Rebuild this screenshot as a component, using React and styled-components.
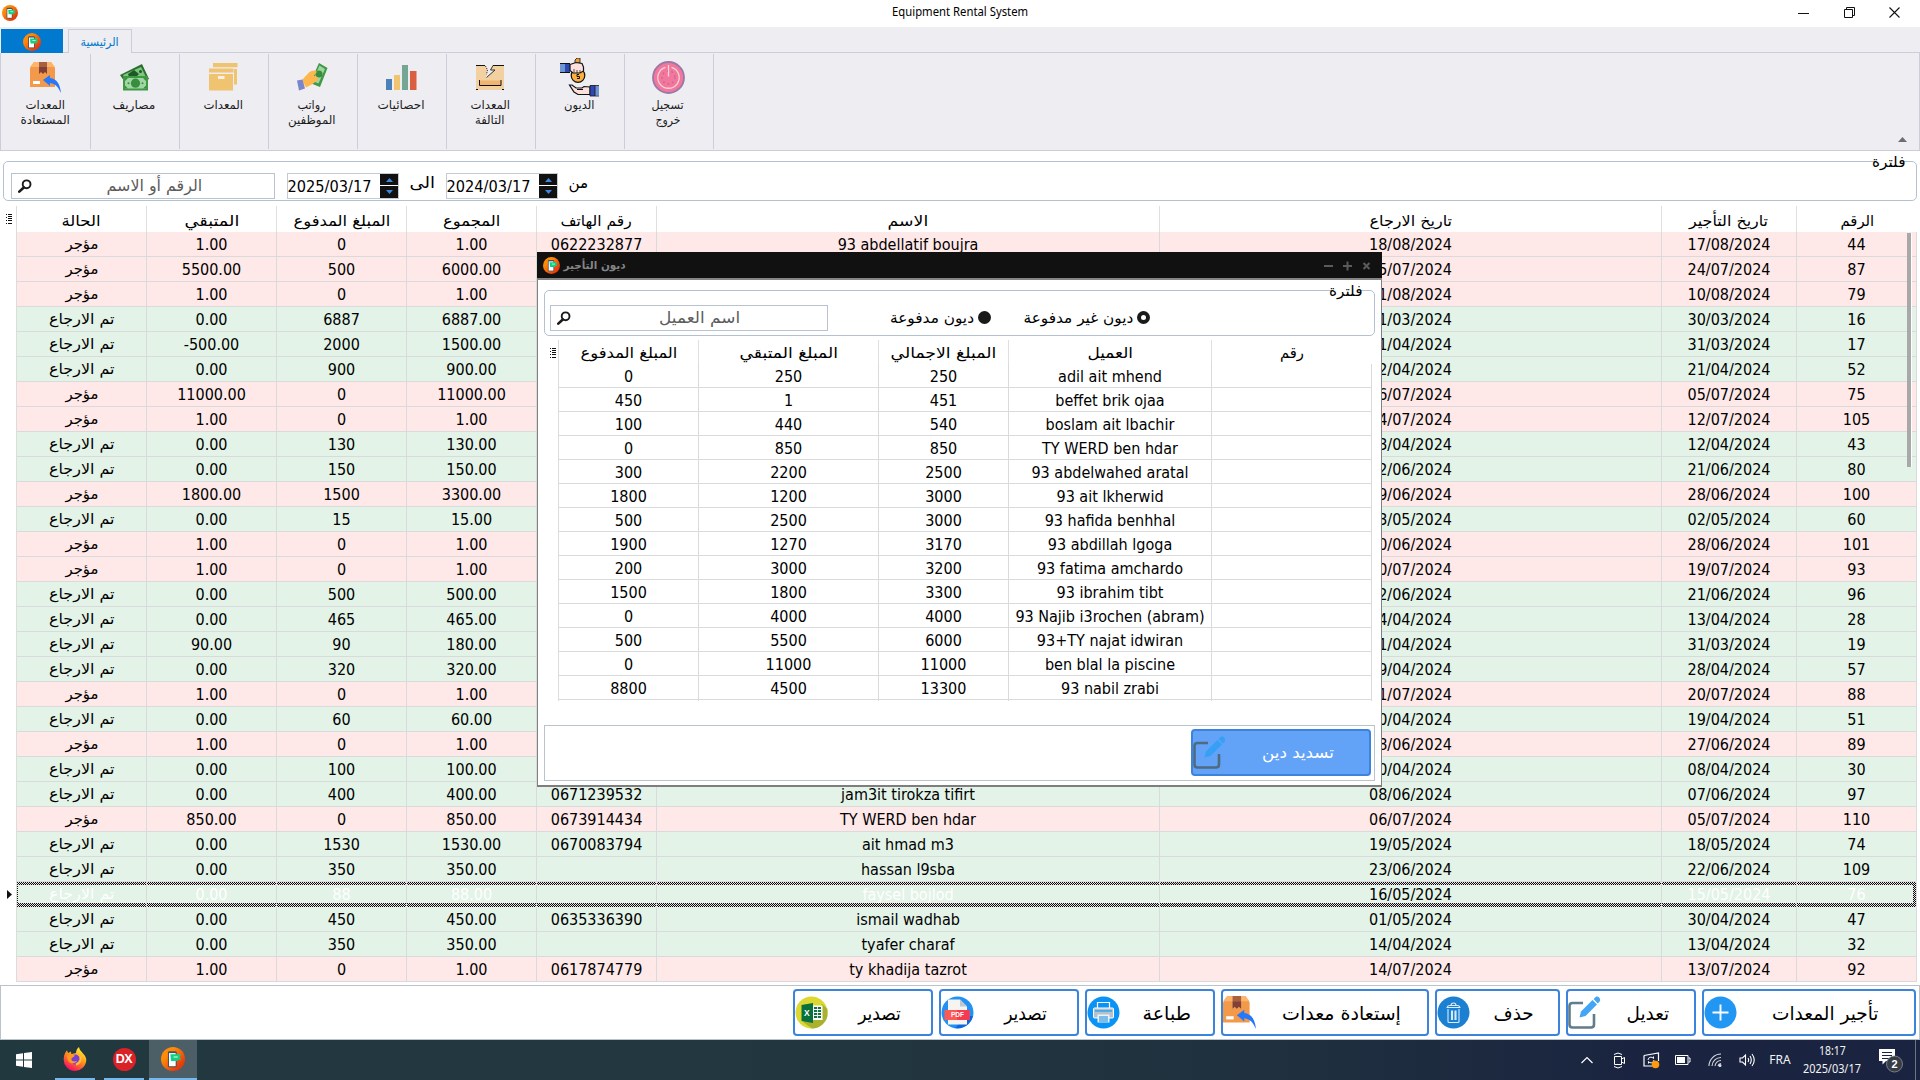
import React, { useLayoutEffect, useRef, useState } from "react";
import styled, { createGlobalStyle, css } from "styled-components";

const Global = createGlobalStyle`
  *{box-sizing:border-box}
  html,body{margin:0;padding:0;width:1920px;height:1080px;overflow:hidden;background:#fff}
  body{font-family:"DejaVu Sans Condensed","DejaVu Sans","Noto Sans",sans-serif;font-stretch:condensed;font-size:16px;color:#000}
  svg{display:block;flex:none}
`;

/* Text stretched horizontally so that it takes the given width */
const FitSpan = styled.span`
  display: inline-block;
  white-space: nowrap;
`;
function Fit({ w, children }) {
  const ref = useRef(null);
  const [s, setS] = useState(1);
  useLayoutEffect(() => {
    if (w && ref.current) setS(w / ref.current.offsetWidth);
  }, [w]);
  return <FitSpan ref={ref} style={{ transform: `scaleX(${s})` }}>{children}</FitSpan>;
}

const Screen = styled.div`
  width: 1920px;
  height: 1080px;
  display: flex;
  flex-direction: column;
  background: #fff;
`;

/* ---------- title bar ---------- */
const TitleBar = styled.header`
  height: 27px;
  display: grid;
  grid-template-columns: 150px 1fr 150px;
  align-items: start;
  flex: none;
`;
const TitleIcon = styled.div`
  padding: 5px 0 0 2px;
`;
const TitleText = styled.div`
  text-align: center;
  font: 12.3px/24px "Noto Sans", sans-serif;
`;
const WinButtons = styled.div`
  display: flex;
  height: 24px;
  align-items: center;
  justify-content: space-between;
  padding: 0 20px 0 28px;
`;

/* ---------- ribbon ---------- */
const Ribbon = styled.nav`
  height: 124px;
  flex: none;
  background: #eeedf2;
  border-bottom: 1px solid #ccccdb;
  display: flex;
  flex-direction: column;
`;
const Tabs = styled.div`
  height: 26px;
  padding: 2px 0 0 1px;
  display: flex;
`;
const FileTab = styled.div`
  width: 62px;
  height: 24px;
  background: #0079ce;
  display: flex;
  justify-content: center;
  align-items: center;
  padding-top: 2px;
`;
const TabGap = styled.div`
  width: ${(p) => p.$w || "auto"};
  flex: ${(p) => (p.$w ? "none" : 1)};
  border-bottom: 1px solid #ccccdb;
`;
const Tab = styled.div`
  width: 64px;
  height: 24px;
  border: 1px solid #ccccdb;
  border-bottom: 0;
  color: #0079ce;
  font-size: 12px;
  line-height: 25px;
  text-align: center;
`;
const Tools = styled.div`
  flex: 1;
  border-left: 1px solid #ccccdb;
  border-right: 1px solid #ccccdb;
  padding: 1px 0;
  display: flex;
  position: relative;
`;
const Tool = styled.div`
  width: 89px;
  height: 95px;
  border-right: 1px solid #ccccdb;
  display: flex;
  flex-direction: column;
  align-items: center;
  font-size: 12px;
  line-height: 15px;
  color: #1c1c1c;
  padding-right: 2px;
  &:first-child { width: 90px; padding-right: 1px; }
`;
const ToolIcon = styled.div`
  height: 44px;
  padding-top: 2px;
  display: flex;
  align-items: center;
  justify-content: center;
`;
const Collapse = styled.div`
  position: absolute;
  right: 12px;
  bottom: 8px;
`;

/* ---------- filter box ---------- */
const Group = styled.section`
  margin: ${(p) => p.$m};
  height: ${(p) => p.$h}px;
  flex: none;
  border: 1px solid #b4c1d2;
  border-radius: 5px;
  padding: 0 0 0 ${(p) => p.$pl}px;
  position: relative;
  display: flex;
  align-items: flex-start;
`;
const GroupLabel = styled.span`
  position: absolute;
  top: -13px;
  right: ${(p) => p.$r}px;
  background: linear-gradient(#fff, #fff) 0 11px / 100% 4px no-repeat;
  line-height: 26px;
  font-size: 15px;
`;
const Search = styled.div`
  width: ${(p) => p.$w}px;
  height: 26px;
  margin-top: ${(p) => p.$mt}px;
  border: 1px solid #b9c3d0;
  display: flex;
  align-items: center;
  padding-left: 6px;
  color: #5c5c5c;
  font-size: 16px;
`;
const SearchText = styled.div`
  flex: 1;
  text-align: center;
  line-height: 22px;
  padding-left: 2px;
`;
const DateBox = styled.div`
  margin-top: 11px;
  margin-left: ${(p) => p.$ml}px;
  width: 112px;
  height: 26px;
  border: 1px solid #c3ccd6;
  display: flex;
  justify-content: space-between;
  line-height: 25px;
  font-size: 16px;
`;
const Spin = styled.div`
  width: 18px;
  display: grid;
  grid-template-rows: 11px 12px;
  gap: 1px;
  & > div { background: #111; display: flex; align-items: center; justify-content: center; }
`;
const Word = styled.div`
  margin: 9px 0 0 ${(p) => p.$ml}px;
  width: ${(p) => p.$w}px;
  display: flex;
  justify-content: center;
  font-size: 16px;
  line-height: 24px;
`;

/* ---------- main table ---------- */
const COLS = "130px 130px 130px 130px 120px 503px 502px 135px 120px";
const TableArea = styled.section`
  height: 776px;
  margin-top: 5px;
  flex: none;
  display: flex;
`;
const Gutter = styled.div`
  width: ${(p) => p.$w}px;
  flex: none;
  display: flex;
  flex-direction: column;
  align-items: flex-end;
  padding: ${(p) => p.$p};
`;
const Marker = styled.div`
  margin-top: 666px;
`;
const Table = styled.div`
  width: ${(p) => p.$w}px;
  flex: none;
  border-left: 1px solid #dcdcdc;
  position: relative;
`;
const HeadRow = styled.div`
  display: grid;
  grid-template-columns: ${(p) => p.$cols};
  height: ${(p) => p.$h}px;
`;
const HeadCell = styled.div`
  border-right: 1px solid #dfdfdf;
  text-align: center;
  font-size: 15px;
  line-height: ${(p) => p.$lh}px;
  &:last-child { border-right: 0; }
`;
const Cell = styled.div`
  border-right: 1px solid #d8dadb;
  text-align: center;
  line-height: ${(p) => p.$lh}px;
  font-size: ${(p) => p.$fs || 16}px;
  white-space: nowrap;
  color: ${(p) => p.$c || "inherit"};
`;
const checker = "repeating-conic-gradient(#0c080a 0 25%, #ece2ea 0 50%)";
const Row = styled.div`
  display: grid;
  grid-template-columns: ${(p) => p.$cols};
  height: ${(p) => p.$h}px;
  background: ${(p) => p.$bg};
  border-bottom: 1px solid #d8dadb;
  color: ${(p) => (p.$sel ? "#fff" : "#000")};
  ${(p) => p.$sel && css`
    ${Cell} {
      background:
        linear-gradient(#e3f3e7, #e3f3e7) 0 3px / 100% 18px no-repeat,
        ${checker} 0 0 / 2px 2px;
      background-clip: content-box;
    }
    ${Cell}:first-child { border-left: 1px dotted #1a1418; }
    ${Cell}:last-child {
      background:
        linear-gradient(#e3f3e7, #e3f3e7) -3px 3px / 100% 18px no-repeat,
        ${checker} 0 0 / 2px 2px;
      background-clip: content-box;
    }
  `}
`;
const Thumb = styled.div`
  position: absolute;
  left: 1890px;
  top: 27px;
  width: 5px;
  height: 234px;
  background: #a8a8a8;
  border-right: 1px solid #fff;
`;

/* ---------- bottom buttons ---------- */
const ActionBar = styled.section`
  height: 55px;
  flex: none;
  border: 1px solid #b9c3cc;
  margin-top: 3px;
  display: flex;
  justify-content: flex-end;
  gap: 6px;
  padding: 3px 3px 0 0;
`;
const ActionButton = styled.div`
  width: ${(p) => p.$w}px;
  height: 47px;
  border: 2px solid #3b83dc;
  border-radius: 4px;
  background: ${(p) => (p.$fill ? "#62a2f7" : "#fff")};
  color: ${(p) => (p.$fill ? "#fff" : "#000")};
  display: flex;
  align-items: center;
  font-size: ${(p) => (p.$fill ? 16 : 19)}px;
  & > svg { margin-top: -1px; }
`;
const ActionText = styled.div`
  flex: 1;
  text-align: center;
  line-height: 28px;
  padding-top: 1px;
`;

/* ---------- modal window ---------- */
const Modal = styled.div`
  position: absolute;
  left: 537px;
  top: 252px;
  width: 845px;
  height: 535px;
  background: #fff;
  border: 1px solid #808080;
  border-top: 0;
  border-bottom: 2px solid #7e7e7e;
  display: flex;
  flex-direction: column;
`;
const ModalTitle = styled.div`
  height: 28px;
  flex: none;
  margin: 0 -1px;
  background: #111;
  border-bottom: 2px solid #858585;
  color: #858585;
  display: flex;
  align-items: center;
  padding: 1px 10px 0 6px;
  font-size: 11px;
  font-weight: bold;
  gap: 5px;
`;
const ModalWin = styled.div`
  margin-left: auto;
  display: flex;
  gap: 9px;
`;
const Radio = styled.div`
  margin: 13px 0 0 ${(p) => p.$ml}px;
  display: flex;
  align-items: center;
  gap: 4px;
  font-size: 15px;
  line-height: 28px;
  & > svg { margin-top: -2px; }
`;
const RadioLabel = styled.div`
  width: ${(p) => p.$w}px;
  display: flex;
  justify-content: center;
`;
const ModalBody = styled.div`
  height: 361px;
  margin-top: 4px;
  flex: none;
  display: flex;
`;
const ModalPanel = styled.div`
  height: 56px;
  margin: 24px 6px 0;
  border: 1px solid #b9c3cc;
  display: flex;
  justify-content: flex-end;
  padding: 3px 3px 0 0;
`;

/* ---------- taskbar ---------- */
const Taskbar = styled.footer`
  height: 40px;
  flex: none;
  display: flex;
  align-items: center;
  background: linear-gradient(90deg, #22383f 0%, #22363f 45%, #1f2f3e 68%, #1a2440 85%, #1a2340 100%);
  color: #f4f4f4;
`;
const TaskItem = styled.div`
  width: ${(p) => p.$w}px;
  height: 40px;
  margin-left: ${(p) => p.$ml || 0}px;
  display: flex;
  align-items: center;
  justify-content: center;
  border-bottom: ${(p) => (p.$line ? "2px solid #76b9ed" : "0")};
  background: ${(p) => (p.$active ? "#4d5f66" : "transparent")};
`;
const DX = styled.div`
  width: 23px;
  height: 23px;
  border-radius: 50%;
  background: #da2128;
  color: #fff;
  font: bold 12.5px/23px "Liberation Sans", sans-serif;
  text-align: center;
  letter-spacing: -0.5px;
`;
const Tray = styled.div`
  margin-left: auto;
  display: grid;
  grid-template-columns: 32px 32px 32px 32px 32px 32px 34px 70px 48px 5px;
  align-items: center;
  justify-items: center;
  height: 40px;
  font: 12px/18px "Noto Sans", sans-serif;
`;
const Clock = styled.div`
  text-align: center;
  white-space: nowrap;
`;
const Peek = styled.div`
  height: 40px;
  border-left: 1px solid #6d7580;
  justify-self: end;
  width: 5px;
`;

/* ---------- icons ---------- */
const AppIcon = ({ s = 16 }) => (
  <svg width={s} height={s} viewBox="0 0 18 18">
    <defs>
      <linearGradient id={"ag" + s} x1="0" y1="0" x2="1" y2="1">
        <stop offset="0.3" stopColor="#ff8a08" /><stop offset="0.8" stopColor="#e63a0c" />
      </linearGradient>
    </defs>
    <circle cx="9" cy="9" r="9" fill={`url(#ag${s})`} />
    <rect x="5.2" y="3.2" width="6.6" height="12" rx="1" fill="#46535e" />
    <rect x="6" y="4.6" width="5" height="9.8" fill="#fff" />
    <path d="M7 5.500H15L14 7.500 15 9.500H12.500V10.500H7.500Z" fill="#12cf86" />
    <path d="M9.4 7.5H12.6" stroke="#d8ffe9" strokeWidth=".8" />
  </svg>
);
const BoxReturn = ({ s = 31 }) => (
  <svg width={s} height={s} viewBox="0 0 31 31">
    <path d="M0 6 4 0H21L25 6V25H0Z" fill="#f39a4a" />
    <path d="M0 5 4 0H21L25 5Z" fill="#fbb56c" />
    <path d="M9 0h8v5H9z" fill="#a9603f" />
    <path d="M9 5h8v7l-2-2-2 2-2-2-2 2z" fill="#80403a" />
    <rect x="3" y="19" width="7" height="3" fill="#fff" />
    <path d="M13 18 20 13V16C27 17 30 22 31 31 28 25 26 22 20 21V24Z" fill="#2578fb" />
  </svg>
);
const Money = () => (
  <svg width="29" height="27" viewBox="0 0 29 27">
    <path d="M0 11 22 0 29 15 9 24Z" fill="#2c6e2f" />
    <path d="M3 11 21 3 26 13 9 22Z" fill="#7cc582" />
    <path d="M8 10 14 6 19 10 16 13H9Z" fill="#1d5a22" />
    <circle cx="20.5" cy="7.5" r="1.5" fill="#1d5a22" />
    <rect x="3" y="12" width="25" height="14.5" fill="#3f9844" />
    <rect x="5" y="14" width="21" height="10.5" fill="#a0d6a4" />
    <circle cx="15.5" cy="19.2" r="4.6" fill="#388e3c" />
    <path d="M5 14h3L5 17zM26 14h-3l3 3zM5 24.500h3L5 21.500zM26 24.500h-3l3-3z" fill="#388e3c" />
    <circle cx="8.500" cy="19.200" r="1" fill="#388e3c" /><circle cx="22.500" cy="19.200" r="1" fill="#388e3c" />
  </svg>
);
const Boxes = () => (
  <svg width="29" height="28" viewBox="0 0 29 28">
    <path d="M4 0H28.500V4.200H4ZM25 6H28V21.500H25Z" fill="#efc36f" />
    <path d="M0 5.500H24.500V9.500H0ZM0 11H24V27.500H0Z" fill="#efc36f" />
    <rect x="9" y="13" width="6.500" height="3" fill="#f8f1e4" />
  </svg>
);
const HandMoney = () => (
  <svg width="31" height="28" viewBox="0 0 31 28">
    <path d="M22 0 30.500 5 23 24 13 20Z" fill="#3f9844" />
    <path d="M22.500 2.500 28 6 21.500 20.500 15.500 18Z" fill="#9ed4a2" />
    <circle cx="22" cy="11" r="3.500" fill="#388e3c" />
    <path d="M5 17 12 9.500C14 8 18 6.500 19.500 8.500 20 10 17 12 17 13 19 14 20.500 13 21 15 21 18 16 21 9 24.500Z" fill="#ffb74d" />
    <path d="M0 17.500 5.500 16.500 8 25.500 2 27.500Z" fill="#7986cb" />
  </svg>
);
const Bars = () => (
  <svg width="31" height="25" viewBox="0 0 31 25">
    <path d="M0 14h6v11H0z" fill="#4b80b8" /><path d="M8 10h6v15H8z" fill="#f1c46f" />
    <path d="M16 0h6v25h-6z" fill="#75a693" /><path d="M24 6h6.500v19H24z" fill="#d95f40" />
  </svg>
);
const Broken = () => (
  <svg width="28" height="25" viewBox="0 0 28 25">
    <path d="M0 0H28V25H0Z" fill="#f3d09f" />
    <path d="M3.500 15.500H25V20.500H3.500Z" fill="#eeb470" />
    <path d="M9 0H17L14.500 5 19 4.500 10 13 11.500 5Z" fill="#eeedf2" />
    <path d="M0 .500H9M17 .500H28M3.500 15V20.500H25V15M0 24.500h2M26 24.500h2" fill="none" stroke="#111" />
    <path d="M9.500 1 11.500 5 10.500 9.500" fill="none" stroke="#222" strokeWidth=".9" strokeDasharray="1.200 1" />
    <path d="M17 .500 14.500 5H19L10.500 12.500" fill="none" stroke="#222" strokeWidth=".9" />
  </svg>
);
const Debts = () => (
  <svg width="39" height="39" viewBox="0 0 39 39">
    <path d="M0 5.500H5V14.500H0Z" fill="#6d96d2" /><path d="M5 5.500H10V14.500H5Z" fill="#2f49b4" />
    <path d="M0 5.500H10M0 14.500H10" stroke="#111" />
    <path d="M15 2 17 0H20V5H15Z" fill="#e9a03a" stroke="#111" strokeWidth=".8" />
    <circle cx="18" cy="17.500" r="6.800" fill="#fbb03f" stroke="#111" strokeWidth="1.200" />
    <path d="M10 6.500 16 4.500 22 5.500 23.500 9V13L20 15H13L10 12.500Z" fill="#fbe0de" stroke="#111" strokeWidth="1.200" />
    <path d="M14 11V14.500M17 12V15M20 12V15" stroke="#111" strokeWidth=".7" />
    <path d="M19 16.500H17V18.500H19.500V20.500H17" fill="none" stroke="#111" />
    <path d="M9.500 27 12 27 16 30H22L24 28.500 30 29V36.500H18L14 34Z" fill="#fbe0de" stroke="#111" strokeWidth="1.200" />
    <path d="M17 31.500H23" stroke="#111" />
    <path d="M30 27.500H35V38H30Z" fill="#2f49b4" /><path d="M35 28H39V37.500H35Z" fill="#6d96d2" />
    <path d="M30 27.500H39M30 38H39M30 27.500V38M35 27.500V38" stroke="#111" strokeWidth=".8" />
  </svg>
);
const Power = () => (
  <svg width="33" height="33" viewBox="0 0 33 33">
    <circle cx="16.500" cy="16.500" r="15.500" fill="#f2779d" stroke="#9a78a8" strokeWidth="1.800" />
    <circle cx="16.500" cy="16.500" r="6.500" fill="none" stroke="#b9668f" strokeWidth="1.300" strokeDasharray="1.500 3.200" />
    <path d="M13.500 6.300A10.700 10.700 0 1 0 19.500 6.300M16.500 4V15.500" fill="none" stroke="#fbd3d8" strokeWidth="1.300" />
  </svg>
);
const Lens = () => (
  <svg width="14" height="14" viewBox="0 0 14 14">
    <circle cx="8.600" cy="5.300" r="3.900" fill="none" stroke="#1b1b1b" strokeWidth="1.900" />
    <path d="M5.800 8.500 1.300 12.600" stroke="#1b1b1b" strokeWidth="2.600" strokeLinecap="round" />
  </svg>
);
const Plus = () => (
  <svg width="33" height="33" viewBox="0 0 33 33">
    <circle cx="16.500" cy="16.500" r="16" fill="#2196f3" />
    <path d="M16.500 8.500V24.500M8.500 16.500H24.500" stroke="#fff" strokeWidth="1.900" />
  </svg>
);
const Edit = ({ dim }) => (
  <svg width="33" height="33" viewBox="0 0 33 33">
    <path d="M15 7H4.500C2.500 7 1.500 8 1.500 10V28.500C1.500 30.500 2.500 31.500 4.500 31.500H23C25 31.500 26 30.500 26 28.500V18" fill="none" stroke={dim ? "#4f6b80" : "#5f7d8c"} strokeWidth="2.600" />
    <path d="M11.500 21.500 13 15.500 24.500 4 29 8.500 17.500 20Z" fill={dim ? "#35a0f5" : "#42a5f5"} />
    <path d="M25.600 3 28 .800C30 -.300 33 2.500 32 5L29.800 7.500Z" fill={dim ? "#35a0f5" : "#42a5f5"} />
  </svg>
);
const Trash = () => (
  <svg width="33" height="33" viewBox="0 0 33 33">
    <circle cx="16.500" cy="16.500" r="16" fill="#1b80d2" />
    <g fill="none" stroke="#d7ebfa" strokeWidth="1.100">
      <path d="M9.500 11.500H23.500M11 13V25.500Q11 26.500 12 26.500H21Q22 26.500 22 25.500V13M13 9.500H20Q22.500 9.500 22.500 11M10.500 11Q10.500 9.500 13 9.500M14 9.500Q14 7 16.500 7 19 7 19 9.500" />
      <path d="M14.500 15H15.500V23.500H14.500ZM18 15H19V23.500H18Z" />
    </g>
  </svg>
);
const Printer = () => (
  <svg width="33" height="33" viewBox="0 0 33 33">
    <circle cx="16.500" cy="16.500" r="16" fill="#0a93f5" />
    <path d="M10.500 12V6.500H22.500V12" fill="none" stroke="#fff" strokeWidth="1.200" />
    <rect x="6.500" y="12" width="20" height="10" rx="1" fill="#b6c2cb" stroke="#fff" />
    <rect x="8" y="14" width="17" height="1.800" fill="#46a8ec" />
    <rect x="10.500" y="18.500" width="12" height="8" fill="#e9f4fb" />
    <path d="M12 21H21M12 23H21M12 25H21" stroke="#1583d8" />
  </svg>
);
const IconText = styled.text`
  font: bold ${(p) => p.$s}px "Liberation Sans", sans-serif;
  fill: #fff;
`;
const Pdf = () => (
  <svg width="33" height="33" viewBox="0 0 33 33">
    <circle cx="16.500" cy="16.500" r="16" fill="#2191f3" />
    <path d="M14 32 26 20 32 20A16 16 0 0 1 14 32Z" fill="#0d66df" />
    <path d="M7 3.500H19L26 10.500V28.500H7Z" fill="#f6f4f0" />
    <path d="M19 3.500 26 10.500H19Z" fill="#bfc6cc" />
    <path d="M3.500 14H28.500V24H3.500Z" fill="#fd5a56" /><path d="M16 14H28.500V24H16Z" fill="#f9394f" />
    <IconText $s={6.500} x="10" y="21.400">PDF</IconText>
  </svg>
);
const Excel = () => (
  <svg width="33" height="33" viewBox="0 0 33 33">
    <circle cx="16.500" cy="16.500" r="16" fill="#dcd831" />
    <path d="M8 26 27 8 32.500 13V20A16 16 0 0 1 17 32.500Z" fill="#aab12f" />
    <rect x="17" y="9.500" width="10.500" height="14.500" fill="#fff" />
    <path d="M19 12H26M19 15H26M19 18H26M19 21H26" stroke="#117243" strokeWidth="1.800" />
    <path d="M22.500 10V24" stroke="#fff" strokeWidth=".8" />
    <path d="M6.500 9 18 7V27L6.500 25Z" fill="#08703c" />
    <IconText $s={8.500} x="9" y="20">X</IconText>
  </svg>
);
const Windows = () => (
  <svg width="16" height="16" viewBox="0 0 16 16"><path d="M0 2.200 7 1.200V7.500H0ZM8 1 16 0V7.500H8ZM0 8.500H7V14.800L0 13.800ZM8 8.500H16V16L8 15Z" fill="#fff" /></svg>
);
const Firefox = () => (
  <svg width="24" height="24" viewBox="0 0 24 24">
    <defs>
      <linearGradient id="ff" x1=".8" y1="0" x2=".25" y2="1"><stop offset=".1" stopColor="#ffe62e" /><stop offset=".5" stopColor="#ff8a1c" /><stop offset=".9" stopColor="#f8195f" /></linearGradient>
    </defs>
    <path d="M12 24A11.500 11.500 0 0 1 .8 11C1 7.500 2.500 5 4 3.300L5 6 8 4.500 8.300 7C10 6.500 12 6.500 13 6 13 3.500 14 1.500 16 0 16.500 3 18 4 20 6.500 22.500 9 23.300 11 23.300 13A11.500 11.500 0 0 1 12 24Z" fill="url(#ff)" />
    <circle cx="12" cy="12.500" r="5" fill="#7a3fd6" />
    <path d="M4 9C6 6.500 9.500 7 11.500 8 12 10.500 8 10 8.500 12.500 9 15 12 14.500 14 14 12 18 5 17 4.500 12Z" fill="#ff9a1e" />
    <path d="M16 7C19 10 18 16 13 17.500" fill="none" stroke="#ffbd2e" strokeWidth="2.200" />
  </svg>
);
const GridMark = () => (
  <svg width="6" height="10" viewBox="0 0 6 10">
    <path d="M0 .500H1M0 3.500H1M0 6.500H1M0 9.500H1M2 .500H6M2 2.500H6M2 4.500H6M2 6.500H6M2 9.500H6" stroke="#111" />
  </svg>
);
const tri = (up) => (
  <svg width="7" height="4" viewBox="0 0 7 4"><path d={up ? "M3.500 0 7 4H0Z" : "M3.500 4 7 0H0Z"} fill="#3d87df" /></svg>
);
const Spinner = () => <Spin><div>{tri(true)}</div><div>{tri(false)}</div></Spin>;

/* ---------- data ---------- */
const HEADS = [["الحالة", 39], ["المتبقي", 55], ["المبلغ المدفوع", 97], ["المجموع", 57], ["رقم الهاتف", 71], ["الاسم", 41], ["تاريخ الارجاع", 83], ["تاريخ التأجير", 79], ["الرقم", 34]];
const ROWS = [
  [1, "1.00", "0", "1.00", "0622232877", "93 abdellatif boujra", "18/08/2024", "17/08/2024", "44"],
  [1, "5500.00", "500", "6000.00", "", "", "25/07/2024", "24/07/2024", "87"],
  [1, "1.00", "0", "1.00", "", "", "11/08/2024", "10/08/2024", "79"],
  [0, "0.00", "6887", "6887.00", "", "", "31/03/2024", "30/03/2024", "16"],
  [0, "-500.00", "2000", "1500.00", "", "", "01/04/2024", "31/03/2024", "17"],
  [0, "0.00", "900", "900.00", "", "", "22/04/2024", "21/04/2024", "52"],
  [1, "11000.00", "0", "11000.00", "", "", "06/07/2024", "05/07/2024", "75"],
  [1, "1.00", "0", "1.00", "", "", "14/07/2024", "12/07/2024", "105"],
  [0, "0.00", "130", "130.00", "", "", "13/04/2024", "12/04/2024", "43"],
  [0, "0.00", "150", "150.00", "", "", "22/06/2024", "21/06/2024", "80"],
  [1, "1800.00", "1500", "3300.00", "", "", "29/06/2024", "28/06/2024", "100"],
  [0, "0.00", "15", "15.00", "", "", "03/05/2024", "02/05/2024", "60"],
  [1, "1.00", "0", "1.00", "", "", "30/06/2024", "28/06/2024", "101"],
  [1, "1.00", "0", "1.00", "", "", "20/07/2024", "19/07/2024", "93"],
  [0, "0.00", "500", "500.00", "", "", "22/06/2024", "21/06/2024", "96"],
  [0, "0.00", "465", "465.00", "", "", "14/04/2024", "13/04/2024", "28"],
  [0, "90.00", "90", "180.00", "", "", "01/04/2024", "31/03/2024", "19"],
  [0, "0.00", "320", "320.00", "", "", "29/04/2024", "28/04/2024", "57"],
  [1, "1.00", "0", "1.00", "", "", "21/07/2024", "20/07/2024", "88"],
  [0, "0.00", "60", "60.00", "", "", "20/04/2024", "19/04/2024", "51"],
  [1, "1.00", "0", "1.00", "", "", "28/06/2024", "27/06/2024", "89"],
  [0, "0.00", "100", "100.00", "", "", "10/04/2024", "08/04/2024", "30"],
  [0, "0.00", "400", "400.00", "0671239532", "jam3it tirokza tifirt", "08/06/2024", "07/06/2024", "97"],
  [1, "850.00", "0", "850.00", "0673914434", "TY WERD ben hdar", "06/07/2024", "05/07/2024", "110"],
  [0, "0.00", "1530", "1530.00", "0670083794", "ait hmad m3", "19/05/2024", "18/05/2024", "74"],
  [0, "0.00", "350", "350.00", "", "hassan l9sba", "23/06/2024", "22/06/2024", "109"],
  [2, "0.00", "88", "88.00", "", "faysel bojlod", "16/05/2024", "15/05/2024", "76"],
  [0, "0.00", "450", "450.00", "0635336390", "ismail wadhab", "01/05/2024", "30/04/2024", "47"],
  [0, "0.00", "350", "350.00", "", "tyafer charaf", "14/04/2024", "13/04/2024", "32"],
  [1, "1.00", "0", "1.00", "0617874779", "ty khadija tazrot", "14/07/2024", "13/07/2024", "92"],
];
const DCOLS = "140px 180px 130px 203px 160px";
const DHEADS = [["المبلغ المدفوع", 97], ["المبلغ المتبقي", 99], ["المبلغ الاجمالي", 106], ["العميل", 45], ["رقم", 24]];
const DROWS = [
  ["0", "250", "250", "adil ait mhend"], ["450", "1", "451", "beffet brik ojaa"], ["100", "440", "540", "boslam ait lbachir"],
  ["0", "850", "850", "TY WERD ben hdar"], ["300", "2200", "2500", "93 abdelwahed aratal"], ["1800", "1200", "3000", "93 ait lkherwid"],
  ["500", "2500", "3000", "93 hafida benhhal"], ["1900", "1270", "3170", "93 abdillah lgoga"], ["200", "3000", "3200", "93 fatima amchardo"],
  ["1500", "1800", "3300", "93 ibrahim tibt"], ["0", "4000", "4000", "93 Najib i3rochen (abram)"], ["500", "5500", "6000", "93+TY najat idwiran"],
  ["0", "11000", "11000", "ben blal la piscine"], ["8800", "4500", "13300", "93 nabil zrabi"],
];
const TOOLS = [
  [<BoxReturn key="i" />, ["المعدات", 40], ["المستعادة", 49]], [<Money key="i" />, ["مصاريف", 43]], [<Boxes key="i" />, ["المعدات", 40]],
  [<HandMoney key="i" />, ["رواتب", 28], ["الموظفين", 48]], [<Bars key="i" />, ["احصائيات", 47]], [<Broken key="i" />, ["المعدات", 40], ["التالفة", 29]],
  [<Debts key="i" />, ["الديون", 30]], [<Power key="i" />, ["تسجيل", 32], ["خروج", 25]],
];
const ACTIONS = [
  [140, <Excel key="i" />, "تصدير", 43], [140, <Pdf key="i" />, "تصدير", 43], [130, <Printer key="i" />, "طباعة", 48],
  [208, <BoxReturn key="i" s={33} />, "إستعادة معدات", 119], [125, <Trash key="i" />, "حذف", 40], [130, <Edit key="i" />, "تعديل", 43], [214, <Plus key="i" />, "تأجير المعدات", 106],
];

export default function App() {
  return (
    <Screen>
      <Global />
      <TitleBar>
        <TitleIcon><AppIcon s={16} /></TitleIcon>
        <TitleText><Fit w={136}>Equipment Rental System</Fit></TitleText>
        <WinButtons>
          <svg width="11" height="11"><path d="M0 6.500H11" stroke="#111" /></svg>
          <svg width="11" height="11"><path d="M.5 2.500H8.500V10.500H.5ZM2.500 2.500V.500H10.500V8.500H8.500" fill="none" stroke="#111" /></svg>
          <svg width="11" height="11"><path d="M.5 .500 10.500 10.500M10.500 .500 .500 10.500" stroke="#111" strokeWidth="1.100" /></svg>
        </WinButtons>
      </TitleBar>
      <Ribbon>
        <Tabs>
          <FileTab><AppIcon s={18} /></FileTab>
          <TabGap $w="5px" />
          <Tab><Fit w={38}>الرئيسية</Fit></Tab>
          <TabGap />
        </Tabs>
        <Tools>
          {TOOLS.map(([icon, ...lines], i) => (
            <Tool key={i}>
              <ToolIcon>{icon}</ToolIcon>
              {lines.map(([t, w]) => <Fit key={t} w={w}>{t}</Fit>)}
            </Tool>
          ))}
          <Collapse><svg width="9" height="5"><path d="M4.500 0 9 5H0Z" fill="#6e6e6e" /></svg></Collapse>
        </Tools>
      </Ribbon>
      <Group $m="10px 3px 0" $h={40} $pl={7}>
        <GroupLabel $r={12}><Fit w={34}>فلترة</Fit></GroupLabel>
        <Search $w={264} $mt={11}><Lens /><SearchText><Fit w={96}>الرقم أو الاسم</Fit></SearchText></Search>
        <DateBox $ml={12}><Fit w={84}>2025/03/17</Fit><Spinner /></DateBox>
        <Word $ml={10} $w={27}><Fit w={25}>الى</Fit></Word>
        <DateBox $ml={10}><Fit w={84}>2024/03/17</Fit><Spinner /></DateBox>
        <Word $ml={10} $w={21}><Fit w={20}>من</Fit></Word>
      </Group>
      <TableArea>
        <Gutter $w={16} $p="8px 4px 0 0">
          <GridMark />
          <Marker><svg width="5" height="9"><path d="M0 0 5 4.500 0 9Z" fill="#111" /></svg></Marker>
        </Gutter>
        <Table $w={1901}>
          <HeadRow $cols={COLS} $h={26}>
            {HEADS.map(([t, w]) => <HeadCell key={t} $lh={30}><Fit w={w}>{t}</Fit></HeadCell>)}
          </HeadRow>
          {ROWS.map(([st, ...cells], i) => (
            <Row key={i} $cols={COLS} $h={25} $bg={st === 1 ? "#ffe8e8" : "#e3f3e7"} $sel={st === 2}>
              <Cell $lh={25} $fs={15}><Fit w={st === 1 ? 33 : 66}>{st === 1 ? "مؤجر" : "تم الارجاع"}</Fit></Cell>
              {cells.map((c, j) => <Cell key={j} $lh={25} $c={st === 2 && j === 5 ? "#000" : undefined}>{c}</Cell>)}
            </Row>
          ))}
          <Thumb />
        </Table>
      </TableArea>
      <ActionBar>
        {ACTIONS.map(([w, icon, t, tw], i) => (
          <ActionButton key={i} $w={w}>{icon}<ActionText><Fit w={tw}>{t}</Fit></ActionText></ActionButton>
        ))}
      </ActionBar>
      <Taskbar>
        <TaskItem $w={16} $ml={16}><Windows /></TaskItem>
        <TaskItem $w={40} $ml={23} $line><Firefox /></TaskItem>
        <TaskItem $w={40} $ml={9} $line><DX>DX</DX></TaskItem>
        <TaskItem $w={48} $ml={5} $line $active><AppIcon s={24} /></TaskItem>
        <Tray>
          <svg width="12" height="8"><path d="M.5 7 6 1.500 11.500 7" fill="none" stroke="#fff" strokeWidth="1.200" /></svg>
          <svg width="13" height="17" fill="none" stroke="#fff"><path d="M1.500 4.500H8.500V12.500H1.500ZM8.500 7 11.500 5.500V11.500L8.500 10M1 2.500Q5 -.500 9 2.500M1 14.500Q5 17.500 9 14.500" /></svg>
          <svg width="17" height="17" fill="none" stroke="#fff"><path d="M1 3.500 15.500 1V9M9 14H1V3.500" strokeWidth="1.200" /><path d="M5 8A3 3 0 0 1 10.500 6.500V4.500M11 8A3 3 0 0 1 5.500 9.500V11.500" /><circle cx="12.500" cy="12.500" r="3.800" fill="#ff9a0d" stroke="none" /></svg>
          <svg width="16" height="10"><path d="M.5 .500H13V9.500H.5ZM13.500 3H15V7H13.500" fill="none" stroke="#fff" /><path d="M2 2H10V8H2Z" fill="#fff" /></svg>
          <svg width="14" height="14" fill="none" stroke="#d6d9de" strokeWidth="1.100"><path d="M1 13A12 12 0 0 1 13 1M4 13A9 9 0 0 1 13 4.500M7 13A6 6 0 0 1 13 7.500M10 13A3.500 3.500 0 0 1 13 10.500" /><circle cx="12" cy="12.500" r="1" fill="#fff" /></svg>
          <svg width="17" height="14" fill="none" stroke="#fff" strokeWidth="1.100"><path d="M1 5H3.500L6.500 2V12L3.500 9H1ZM9 5Q10.300 7 9 9M11 3Q13.500 7 11 11M13 1Q17.500 7 13 13" /></svg>
          <Fit w={21}>FRA</Fit>
          <Clock><Fit w={27}>18:17</Fit><br /><Fit w={58}>2025/03/17</Fit></Clock>
          <svg width="28" height="26" viewBox="0 0 28 26">
            <path d="M2 2H18V14H9L5.500 17.500V14H2Z" fill="#fff" />
            <path d="M5 5.500H15M5 8.500H15M5 11.500H12" stroke="#1a2340" />
            <circle cx="17.500" cy="17" r="8" fill="#373d47" stroke="#8b8f97" strokeWidth=".8" />
            <IconText $s={11} x="14.500" y="21">2</IconText>
          </svg>
          <Peek />
        </Tray>
      </Taskbar>

      <Modal>
        <ModalTitle>
          <AppIcon s={17} /><Fit w={62}>ديون التأجير</Fit>
          <ModalWin>
            {["M0 5H9", "M0 5H9M4.500 .500V9.500", "M1.500 2 7.500 8M7.500 2 1.500 8"].map((d) => (
              <svg key={d} width="10" height="10"><path d={d} stroke="#5b5b5b" strokeWidth="2" /></svg>
            ))}
          </ModalWin>
        </ModalTitle>
        <Group $m="10px 6px 0" $h={46} $pl={5}>
          <GroupLabel $r={13}><Fit w={34}>فلترة</Fit></GroupLabel>
          <Search $w={278} $mt={14}><Lens /><SearchText><Fit w={81}>اسم العميل</Fit></SearchText></Search>
          <Radio $ml={62}>
            <RadioLabel $w={84}><Fit w={84}>ديون مدفوعة</Fit></RadioLabel>
            <svg width="13" height="13"><circle cx="6.500" cy="6.500" r="6.500" fill="#1a1a1a" /></svg>
          </Radio>
          <Radio $ml={32}>
            <RadioLabel $w={110}><Fit w={110}>ديون غير مدفوعة</Fit></RadioLabel>
            <svg width="13" height="13"><circle cx="6.500" cy="6.500" r="6.500" fill="#1a1a1a" /><circle cx="6.500" cy="6.500" r="2.500" fill="#fff" /></svg>
          </Radio>
        </Group>
        <ModalBody>
          <Gutter $w={20} $p="8px 2px 0 0"><GridMark /></Gutter>
          <Table $w={814}>
            <HeadRow $cols={DCOLS} $h={24}>
              {DHEADS.map(([t, w]) => <HeadCell key={t} $lh={26}><Fit w={w}>{t}</Fit></HeadCell>)}
            </HeadRow>
            {DROWS.map((r, i) => (
              <Row key={i} $cols={DCOLS} $h={24} $bg="#fff">
                {[...r, ""].map((c, j) => <Cell key={j} $lh={25}>{c}</Cell>)}
              </Row>
            ))}
          </Table>
        </ModalBody>
        <ModalPanel>
          <ActionButton $w={180} $fill><Edit dim /><ActionText><Fit w={72}>تسديد دين</Fit></ActionText></ActionButton>
        </ModalPanel>
      </Modal>
    </Screen>
  );
}
